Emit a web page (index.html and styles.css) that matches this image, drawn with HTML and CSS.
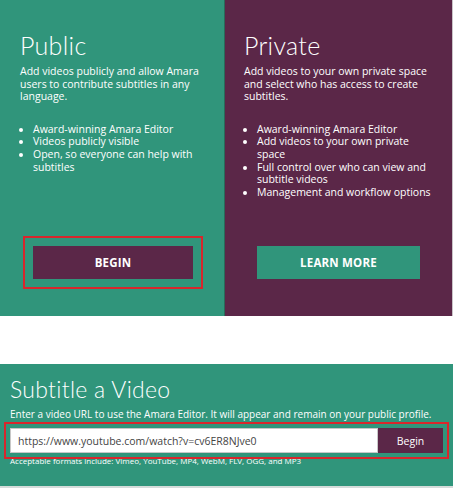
FILE: index.html
```html
<!DOCTYPE html>
<html>
<head>
<meta charset="utf-8">
<link rel="stylesheet" href="styles.css">
</head>
<body>
<div class="page">
  <div class="plans">
    <section class="plan plan-public">
      <h2 class="plan-title">Public</h2>
      <p class="plan-desc">Add videos publicly and allow Amara users to contribute subtitles in any language.</p>
      <ul class="plan-list">
        <li>Award-winning Amara Editor</li>
        <li>Videos publicly visible</li>
        <li>Open, so everyone can help with subtitles</li>
      </ul>
      <div class="plan-action">
        <a class="btn btn-purple btn-marked">BEGIN</a>
      </div>
    </section>
    <section class="plan plan-private">
      <h2 class="plan-title">Private</h2>
      <p class="plan-desc">Add videos to your own private space and select who has access to create subtitles.</p>
      <ul class="plan-list">
        <li>Award-winning Amara Editor</li>
        <li>Add videos to your own private space</li>
        <li>Full control over who can view and subtitle videos</li>
        <li>Management and workflow options</li>
      </ul>
      <div class="plan-action">
        <a class="btn btn-green">LEARN MORE</a>
      </div>
    </section>
  </div>
  <div class="spacer"></div>
  <section class="subtitle">
    <h2 class="subtitle-title">Subtitle a Video</h2>
    <p class="subtitle-desc">Enter a video URL to use the Amara Editor. It will appear and remain on your public profile.</p>
    <div class="url-row">
      <div class="url-input">https://www.youtube.com/watch?v=cv6ER8NJve0</div>
      <div class="url-btn">Begin</div>
    </div>
    <p class="formats">Acceptable formats include: Vimeo, YouTube, MP4, WebM, FLV, OGG, and MP3</p>
  </section>
</div>
</body>
</html>
```

FILE: styles.css
```css
html, body {
  margin: 0;
  padding: 0;
  background: #ffffff;
}
.page {
  width: 453px;
  font-family: "Open Sans", "Liberation Sans", sans-serif;
  color: #ffffff;
}
.plans {
  display: grid;
  grid-template-columns: 225px 228px;
  height: 316px;
}
.plan {
  display: flex;
  flex-direction: column;
  padding: 30px 20px 37px 20px;
}
.plan-public {
  background: #30957b;
  border-right: 1px solid #2a6a5a;
  padding-left: 20px;
}
.plan-private {
  background: #5b2748;
  padding-left: 19px;
  border-right: 1px solid #c9c4c8;
}
.plan-title {
  margin: 0;
  font-family: "Lato", "Open Sans", sans-serif;
  font-weight: 300;
  font-size: 25px;
  line-height: 30px;
  letter-spacing: 0.3px;
}
.plan-desc {
  margin: 5px 0 0 0;
  font-size: 10.5px;
  line-height: 12.6px;
}
.plan-list {
  margin: 20px 0 0 0;
  padding-left: 13px;
  font-size: 10.5px;
  line-height: 12.6px;
}
.plan-action {
  margin-top: auto;
  display: flex;
}
.plan-public .plan-action {
  padding-left: 13px;
}
.plan-private .plan-action {
  padding-left: 13px;
}
.btn {
  display: flex;
  align-items: center;
  justify-content: center;
  height: 33px;
  font-weight: 700;
  font-size: 11.5px;
  letter-spacing: 0.2px;
}
.btn-purple {
  width: 160px;
  background: #5b2748;
}
.btn-green {
  width: 163px;
  background: #30957b;
}
.btn-marked {
  outline: 2px solid #d9262c;
  outline-offset: 8px;
}
.spacer {
  height: 48px;
}
.subtitle {
  background: #30957b;
  height: 124px;
  box-sizing: border-box;
  padding: 12px 10px 0 10px;
  border-bottom: 2px solid #d5dcda;
}
.subtitle-title {
  margin: 0;
  font-family: "Lato", "Open Sans", sans-serif;
  font-weight: 300;
  font-size: 23px;
  line-height: 27px;
  letter-spacing: 0.3px;
}
.subtitle-desc {
  margin: 5px 0 0 0;
  font-size: 10px;
  line-height: 13px;
}
.url-row {
  display: flex;
  margin-top: 7px;
  height: 25px;
  outline: 2px solid #d9262c;
  outline-offset: 4px;
  width: 433px;
}
.url-input {
  flex: 1;
  background: #ffffff;
  color: #444444;
  font-size: 10.5px;
  line-height: 25px;
  padding-left: 7px;
  border: 1px solid #c8c8c8;
  box-sizing: border-box;
}
.url-btn {
  width: 65px;
  background: #5b2748;
  font-size: 10.5px;
  display: flex;
  align-items: center;
  justify-content: center;
}
.formats {
  margin: 2px 0 0 0;
  font-size: 8px;
  line-height: 11px;
}
```
